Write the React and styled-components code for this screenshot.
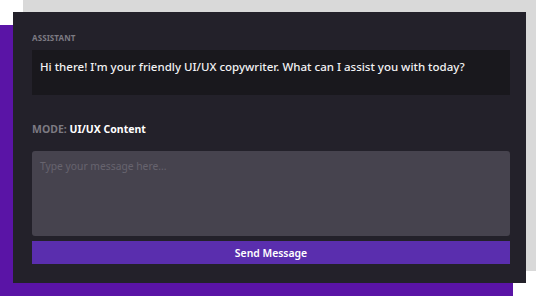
import styled, { createGlobalStyle } from 'styled-components'

const GlobalStyle = createGlobalStyle`
  html, body {
    margin: 0;
    padding: 0;
    background: #ffffff;
  }
  body {
    font-family: "Noto Sans", "Open Sans", sans-serif;
  }
`

const Stage = styled.div`
  padding: 12px 0 0 13px;
  height: 297px;
  box-sizing: border-box;
  overflow: hidden;
`

const Panel = styled.section`
  width: 513px;
  box-sizing: border-box;
  padding: 21px 16px 19px 19px;
  background: #23212a;
  box-shadow: 10px -12px 0 #d9d9d9, -13px 13px 0 #5a14a6;
  display: flex;
  flex-direction: column;
`

const Label = styled.div`
  font-size: 8px;
  line-height: 10px;
  font-weight: 700;
  text-transform: uppercase;
  letter-spacing: 0.1px;
  color: #7c7a82;
  margin-bottom: 7px;
`

const Bubble = styled.div`
  background: #19181d;
  padding: 8px 8px 19px;
  font-size: 11.5px;
  line-height: 18px;
  font-weight: 500;
  color: #f2f2f4;
`

const Mode = styled.div`
  margin-top: 27px;
  font-size: 10.5px;
  line-height: 14px;
  font-weight: 700;
  color: #ffffff;

  span {
    color: #7c7a82;
  }
`

const MessageInput = styled.textarea`
  margin-top: 15px;
  height: 85px;
  box-sizing: border-box;
  resize: none;
  border: none;
  outline: none;
  border-radius: 3px;
  background: #46434e;
  padding: 8px;
  font-family: inherit;
  font-size: 10.3px;
  line-height: 14px;
  color: #e8e8ea;

  &::placeholder {
    color: #67646e;
  }
`

const SendButton = styled.button`
  margin-top: 5px;
  height: 23px;
  border: none;
  background: #5a2eae;
  color: #ffffff;
  font-family: inherit;
  font-size: 10.4px;
  font-weight: 600;
  cursor: pointer;
`

export default function App() {
  return (
    <>
      <GlobalStyle />
      <Stage>
        <Panel>
          <Label>Assistant</Label>
          <Bubble>Hi there! I'm your friendly UI/UX copywriter. What can I assist you with today?</Bubble>
          <Mode><span>MODE:</span> UI/UX Content</Mode>
          <MessageInput placeholder="Type your message here..." />
          <SendButton>Send Message</SendButton>
        </Panel>
      </Stage>
    </>
  )
}
